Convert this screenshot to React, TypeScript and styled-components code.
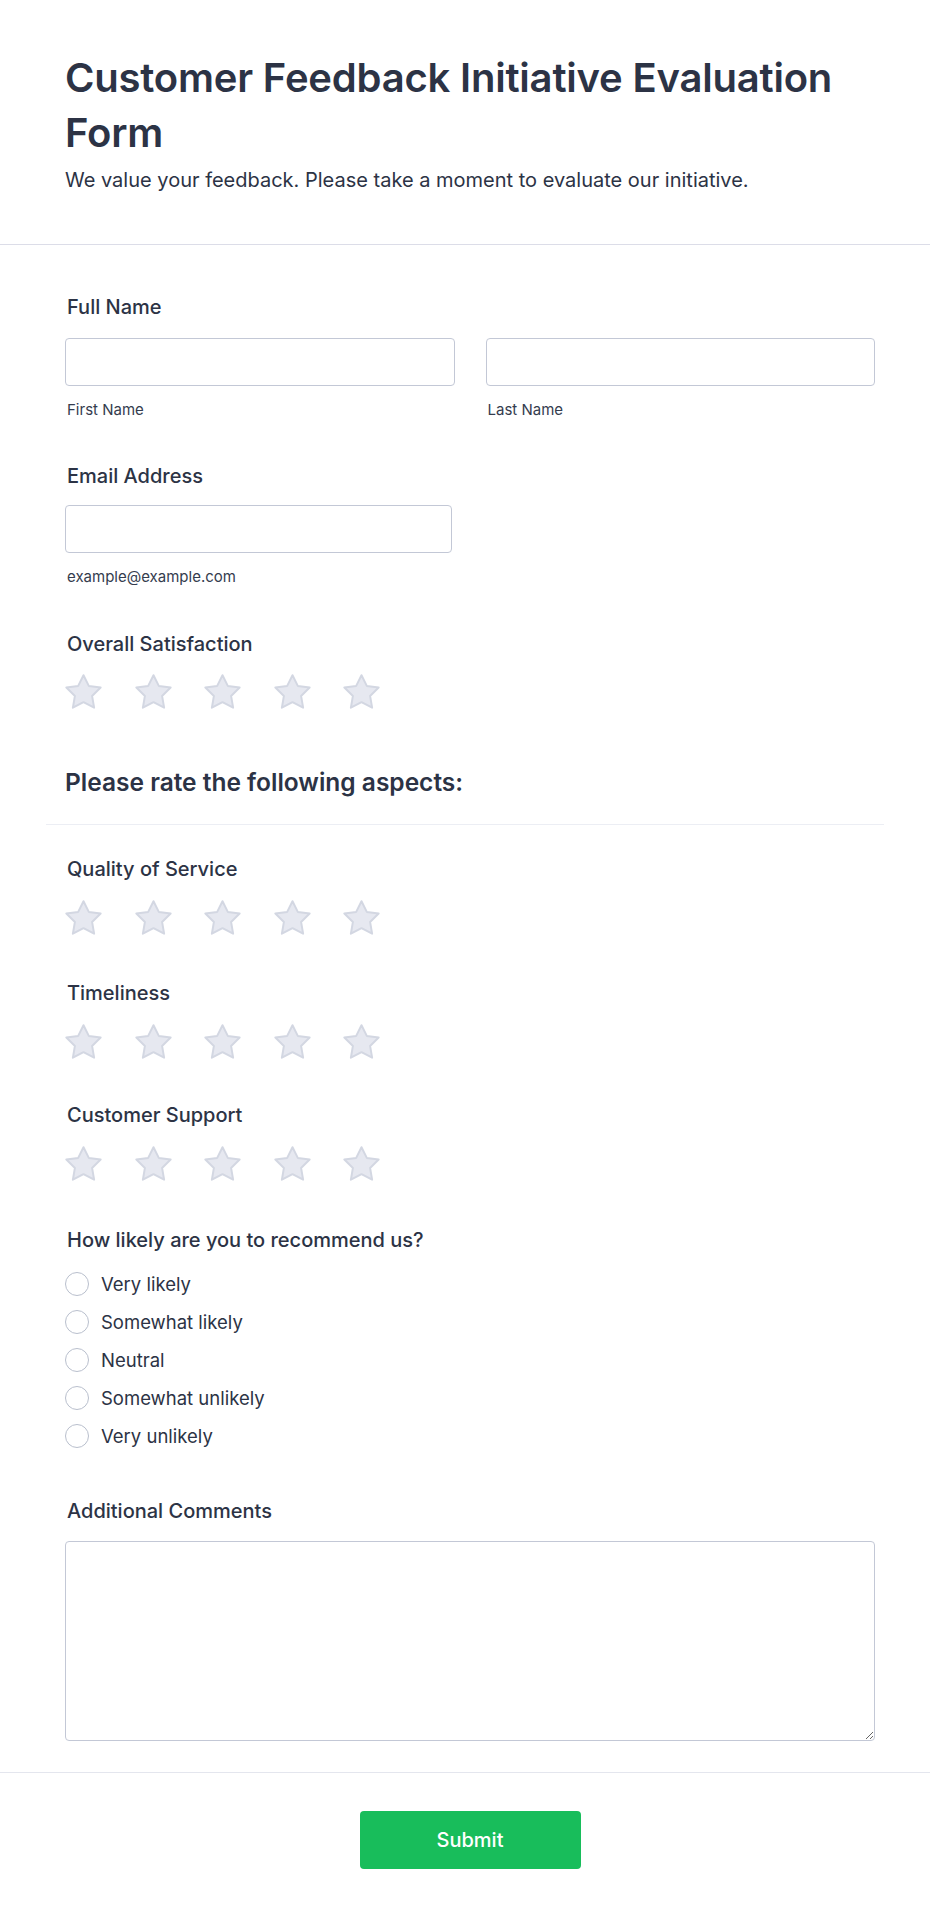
import React from "react";
import styled, { createGlobalStyle } from "styled-components";

const GlobalStyle = createGlobalStyle`
  html, body {
    margin: 0;
    padding: 0;
    background: #ffffff;
  }
  body {
    font-family: Inter, "Noto Sans", "Liberation Sans", sans-serif;
    color: #2c3345;
    -webkit-font-smoothing: antialiased;
  }
  * { box-sizing: border-box; }
`;

const Page = styled.div`
  width: 930px;
  min-height: 1919px;
  background: #ffffff;
  display: flex;
  flex-direction: column;
`;

const Header = styled.header`
  padding: 50px 55px 51px 65px;
  border-bottom: 1px solid #dcdde8;
`;

const Title = styled.h1`
  margin: 0;
  font-size: 40px;
  line-height: 55px;
  font-weight: 600;
  color: #2c3345;
  letter-spacing: -0.2px;
`;

const Description = styled.p`
  margin: 7px 0 0;
  font-size: 20px;
  line-height: 26px;
  font-weight: 400;
  color: #2c3345;
`;

const Body = styled.main`
  padding: 50px 46px 31px;
  display: flex;
  flex-direction: column;
`;

const Question = styled.section<{ $top?: number }>`
  margin-top: ${(p) => p.$top ?? 0}px;
  padding: 0 9px 0 19px;
  display: flex;
  flex-direction: column;
`;

const Label = styled.label<{ $gap?: number }>`
  display: block;
  font-size: 20px;
  line-height: 24px;
  font-weight: 500;
  color: #2c3345;
  padding-left: 2px;
  margin-bottom: ${(p) => p.$gap ?? 18}px;
`;

const NameRow = styled.div`
  display: grid;
  grid-template-columns: 1fr 1fr;
  column-gap: 31px;
`;

const Field = styled.div<{ $width?: number }>`
  display: flex;
  flex-direction: column;
  width: ${(p) => (p.$width ? `${p.$width}px` : "auto")};
`;

const TextInput = styled.input`
  height: 48px;
  width: 100%;
  border: 1px solid #c3c8d6;
  border-radius: 4px;
  background: #fff;
  font-family: inherit;
  font-size: 16px;
  padding: 0 12px;
  outline: none;
`;

const SubLabel = styled.span`
  margin-top: 15px;
  padding-left: 2px;
  font-size: 15px;
  line-height: 18px;
  color: #343c4e;
`;

const StarRow = styled.div`
  display: flex;
  gap: 32.5px;
  height: 37px;
  align-items: center;
`;

const StarBox = styled.span`
  display: inline-flex;
  width: 37px;
  height: 37px;
  align-items: center;
  justify-content: center;
`;

const SectionHeading = styled.div<{ $top?: number }>`
  margin-top: ${(p) => p.$top ?? 0}px;
  padding: 0 9px 27px 19px;
  border-bottom: 1px solid #eceef4;
`;

const HeadingText = styled.h2`
  margin: 0;
  font-size: 24.5px;
  line-height: 30px;
  font-weight: 600;
  color: #2c3345;
`;

const RadioList = styled.div`
  display: flex;
  flex-direction: column;
`;

const RadioRow = styled.label`
  display: flex;
  align-items: center;
  height: 38px;
  gap: 12px;
  font-size: 18.5px;
  color: #2c3345;
  cursor: pointer;
`;

const RadioCircle = styled.span`
  width: 24px;
  height: 24px;
  border-radius: 50%;
  border: 1.5px solid #b9bfcd;
  background: #fff;
  flex-shrink: 0;
`;

const TextArea = styled.textarea`
  width: 100%;
  height: 200px;
  border: 1px solid #c3c8d6;
  border-radius: 4px;
  font-family: inherit;
  font-size: 16px;
  padding: 10px 12px;
  resize: vertical;
  outline: none;
  display: block;
`;

const Footer = styled.footer`
  border-top: 1px solid #e4e6ee;
  padding: 38px 0 50px;
  display: flex;
  justify-content: center;
`;

const SubmitButton = styled.button`
  width: 221px;
  height: 58px;
  margin-left: 10px;
  background: #18bd5b;
  color: #ffffff;
  border: none;
  border-radius: 4px;
  font-family: inherit;
  font-size: 20px;
  font-weight: 500;
  cursor: pointer;
`;

const Star = () => (
  <StarBox>
    <svg viewBox="1.8 1.9 20.4 19.4" width="37" height="35">
      <polygon
        points="12,2.6 14.94,8.5 21.5,9.4 16.76,14.05 17.88,20.6 12,17.5 6.12,20.6 7.24,14.05 2.5,9.4 9.06,8.5"
        fill="#e6e8f0"
        stroke="#d3d7e2"
        strokeWidth="1.1"
        strokeLinejoin="round"
      />
    </svg>
  </StarBox>
);

const Stars = () => (
  <StarRow>
    {[0, 1, 2, 3, 4].map((i) => (
      <Star key={i} />
    ))}
  </StarRow>
);

const options = [
  "Very likely",
  "Somewhat likely",
  "Neutral",
  "Somewhat unlikely",
  "Very unlikely",
];

export default function App() {
  return (
    <>
      <GlobalStyle />
      <Page>
        <Header>
          <Title>Customer Feedback Initiative Evaluation Form</Title>
          <Description>
            We value your feedback. Please take a moment to evaluate our initiative.
          </Description>
        </Header>
        <Body>
          <Question>
            <Label $gap={19}>Full Name</Label>
            <NameRow>
              <Field>
                <TextInput type="text" />
                <SubLabel>First Name</SubLabel>
              </Field>
              <Field>
                <TextInput type="text" />
                <SubLabel>Last Name</SubLabel>
              </Field>
            </NameRow>
          </Question>

          <Question $top={45}>
            <Label $gap={17}>Email Address</Label>
            <Field $width={387}>
              <TextInput type="email" />
              <SubLabel>example@example.com</SubLabel>
            </Field>
          </Question>

          <Question $top={46}>
            <Label $gap={17}>Overall Satisfaction</Label>
            <Stars />
          </Question>

          <SectionHeading $top={57}>
            <HeadingText>Please rate the following aspects:</HeadingText>
          </SectionHeading>

          <Question $top={32}>
            <Label $gap={18}>Quality of Service</Label>
            <Stars />
          </Question>

          <Question $top={45}>
            <Label $gap={18}>Timeliness</Label>
            <Stars />
          </Question>

          <Question $top={43}>
            <Label $gap={18}>Customer Support</Label>
            <Stars />
          </Question>

          <Question $top={46}>
            <Label $gap={13}>How likely are you to recommend us?</Label>
            <RadioList>
              {options.map((o) => (
                <RadioRow key={o}>
                  <RadioCircle />
                  {o}
                </RadioRow>
              ))}
            </RadioList>
          </Question>

          <Question $top={44}>
            <Label $gap={18}>Additional Comments</Label>
            <TextArea />
          </Question>
        </Body>
        <Footer>
          <SubmitButton type="button">Submit</SubmitButton>
        </Footer>
      </Page>
    </>
  );
}
